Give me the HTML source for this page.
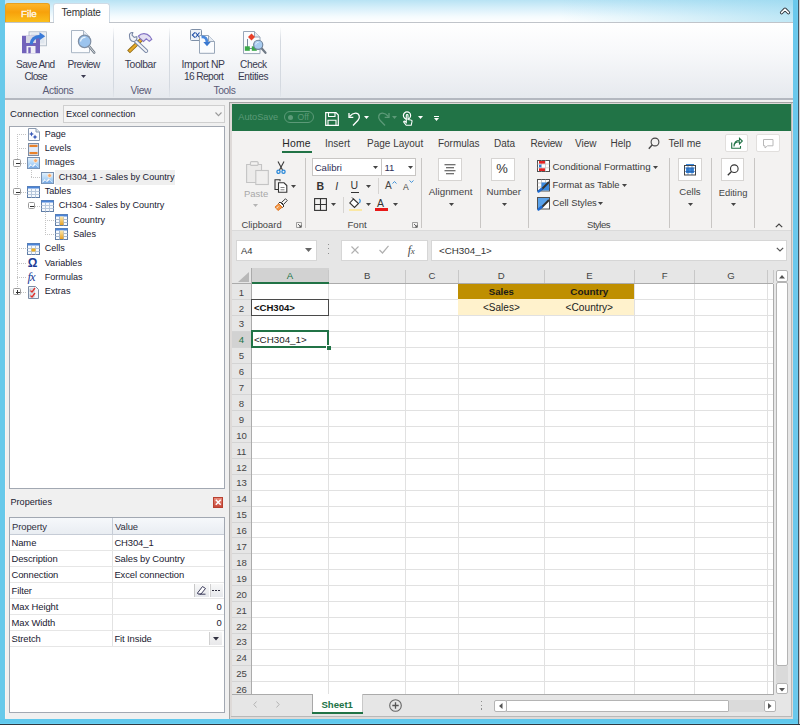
<!DOCTYPE html>
<html><head><meta charset="utf-8">
<style>
*{box-sizing:border-box;margin:0;padding:0}
html,body{width:800px;height:725px;overflow:hidden;background:#f0f0f0;font-family:"Liberation Sans",sans-serif;}
.a{position:absolute}
.t{position:absolute;white-space:nowrap;line-height:1;font-family:"Liberation Sans",sans-serif}
svg{position:absolute;overflow:visible}
</style></head><body>

<!-- top title/tab bar -->
<div class="a" style="left:0;top:0;width:800px;height:22px;background:linear-gradient(180deg,#b8e3f4 0%,#d6effa 35%,#f4fbfe 75%,#ffffff 100%)"></div>
<div class="a" style="left:560px;top:0;width:240px;height:22px;background:linear-gradient(90deg,rgba(140,212,238,0) 0%,rgba(140,212,238,.55) 100%)"></div>

<!-- File tab -->
<div class="a" style="left:5px;top:3px;width:45px;height:19px;border-radius:3px 3px 0 0;background:linear-gradient(180deg,#fdb52a 0%,#f7a10b 45%,#fbbf1b 100%);border:1px solid #e8a020;border-bottom:none"></div>
<div class="t" style="left:21px;top:8.6px;font-size:9.8px;color:#fff8ec;-webkit-text-stroke:0.35px #fff8ec">File</div>
<!-- Template tab -->
<div class="a" style="left:53px;top:3px;width:57px;height:20px;border-radius:3px 3px 0 0;background:#fff;border:1px solid #cfdbe6;border-bottom:none"></div>
<div class="t" style="left:61.4px;top:7.5px;font-size:10px;letter-spacing:-0.15px;color:#333">Template</div>

<!-- ribbon body -->
<div class="a" style="left:5px;top:21.5px;width:788px;height:77px;background:linear-gradient(180deg,#ffffff 0%,#f7f8fa 40%,#e6e9ee 100%);border-top:1px solid #c0c4ca"></div>
<div class="a" style="left:5px;top:97.5px;width:788px;height:2.5px;background:#b4b8c0"></div>

<!-- top ribbon contents -->
<svg style="left:779.5px;top:7px" width="10" height="7.5" viewBox="0 0 10 7.5"><path d="M1.6 5.6L5 2.2 8.4 5.6" fill="none" stroke="#2a3038" stroke-width="3.4" stroke-linecap="round" stroke-linejoin="round"/><path d="M1.6 5.6L5 2.2 8.4 5.6" fill="none" stroke="#fff" stroke-width="1.6" stroke-linecap="round" stroke-linejoin="round"/></svg>
<!-- separators -->
<div class="a" style="left:112.5px;top:27px;width:1px;height:70px;background:linear-gradient(180deg,rgba(210,216,224,0),#d4d9e0 20%,#d4d9e0 85%,rgba(210,216,224,.3))"></div>
<div class="a" style="left:169px;top:27px;width:1px;height:70px;background:linear-gradient(180deg,rgba(210,216,224,0),#d4d9e0 20%,#d4d9e0 85%,rgba(210,216,224,.3))"></div>
<div class="a" style="left:279.8px;top:27px;width:1px;height:70px;background:linear-gradient(180deg,rgba(210,216,224,0),#d4d9e0 20%,#d4d9e0 85%,rgba(210,216,224,.3))"></div>

<!-- Save and Close icon -->
<svg style="left:22px;top:31px" width="25" height="23" viewBox="0 0 25 23">
 <rect x="7" y="0.8" width="17.5" height="14" fill="#eef1f5" stroke="#a8b4c0" stroke-width="0.8"/>
 <rect x="9" y="2.5" width="13.5" height="10" fill="#dfe6ee"/>
 <path d="M0 4.7H16.5L18 6.2V22.2H0Z" fill="#7262ba"/>
 <rect x="4" y="4.7" width="10" height="7.3" fill="#d8d8e4"/>
 <rect x="4.5" y="15" width="9" height="7.2" fill="#f0eff6"/>
 <rect x="6.3" y="16.3" width="2.4" height="5.9" fill="#7262ba"/>
 <path d="M9 13.5C9.5 8.5 12.5 5.5 18.5 5.3" fill="none" stroke="#3a7ad8" stroke-width="3.2"/>
 <path d="M17.5 1.3L23.2 5.3 17.5 9.3z" fill="#3a7ad8"/>
</svg>
<!-- Preview icon -->
<svg style="left:71px;top:30px" width="25" height="25" viewBox="0 0 25 25">
 <path d="M0.5 0.5H12.5L18.5 6.5V22.7H0.5Z" fill="#fbfcfe" stroke="#a9b5c4"/>
 <path d="M12.5 0.5V6.5H18.5" fill="#e4eaf2" stroke="#a9b5c4"/>
 <path d="M17.5 15.5L23.2 22.5" stroke="#707a86" stroke-width="2.6" stroke-linecap="round"/>
 <path d="M17.5 15.5L23.2 22.5" stroke="#d8dde2" stroke-width="1" stroke-linecap="round"/>
 <circle cx="13.6" cy="11.4" r="6.2" fill="#9cc4ee" stroke="#7e8ea4" stroke-width="1.2"/>
 <path d="M9.5 11.5C9.8 8.7 11.6 7.2 14.5 7.3" fill="none" stroke="#eaf4fc" stroke-width="1.3"/>
</svg>
<!-- Toolbar icon -->
<svg style="left:124px;top:28px" width="32" height="28" viewBox="0 0 32 28">
 <path d="M6 22.5L18.5 10.5" stroke="#8a6410" stroke-width="4" stroke-linecap="square"/>
 <path d="M6 22.5L18.5 10.5" stroke="#e6aa28" stroke-width="2.4" stroke-linecap="square"/>
 <path d="M14.5 8C17.5 4.8 22.5 4.8 26 8.5L27.8 11.3 25.3 13.3 22.3 10.8 19.5 13.5 15.5 9.8Z" fill="#e4e0f2" stroke="#8474c4" stroke-width="1.1"/>
 <path d="M11.5 13L22.2 23" stroke="#7a88a6" stroke-width="4" stroke-linecap="round"/>
 <path d="M11.5 13L22.2 23" stroke="#f2f4f8" stroke-width="2" stroke-linecap="round"/>
 <path d="M5.5 8C5 5.8 6.5 4.3 8.8 4.6L8 7.2 10.2 9.3 12.8 8.6C13.5 11 11.8 13.8 9.2 13.5 6.8 13.3 5.6 10.5 5.5 8Z" fill="#f2f4f8" stroke="#7a88a6" stroke-width="1.1"/>
</svg>
<!-- Import NP icon -->
<svg style="left:190px;top:28.5px" width="26" height="25" viewBox="0 0 26 25">
 <rect x="0.5" y="0.5" width="11" height="11" rx="1" fill="#eef2f8" stroke="#7e90a8"/>
 <path d="M5 3.3L2.3 6 5 8.7" fill="none" stroke="#2050a8" stroke-width="1.1"/><path d="M5.5 3.5L9.5 8.5M9.5 3.5L5.5 8.5" stroke="#2050a8" stroke-width="1.1"/>
 <path d="M9.5 6.5H18.5L24.5 12.5V24.3H9.5Z" fill="#fbfcfe" stroke="#98a6b8"/>
 <path d="M18.5 6.5V12.5H24.5" fill="#e4eaf2" stroke="#98a6b8"/>
 <path d="M11.5 8C15 7.5 17 9.5 17 13.5" fill="none" stroke="#4a88dc" stroke-width="2.8"/>
 <path d="M13.3 13H20.7L17 17.3z" fill="#3a78d0"/>
</svg>
<!-- Check Entities icon -->
<svg style="left:242.5px;top:30.5px" width="24" height="24" viewBox="0 0 24 24">
 <path d="M0.5 0.5H11.5L17 6V22.6H0.5Z" fill="#fbfcfe" stroke="#98a6b8"/>
 <path d="M11.5 0.5V6H17" fill="#e4eaf2" stroke="#98a6b8"/>
 <path d="M4.5 8V17.5H9" fill="none" stroke="#6a7a90" stroke-width="0.9"/>
 <path d="M8.5 2.5L12 6 8.5 9.5 5 6z" fill="#e8402a"/>
 <rect x="1.8" y="15.3" width="5" height="4.5" fill="#3aa848"/>
 <rect x="8.8" y="15.3" width="5" height="4.5" fill="#3aa848"/>
 <path d="M17.5 16L22.5 21.8" stroke="#707a86" stroke-width="2.2" stroke-linecap="round"/>
 <circle cx="15.2" cy="13.8" r="4.6" fill="#a8ccf0" stroke="#6e8098" stroke-width="1.1"/>
 <path d="M12.8 13.5C13 12 14 11.3 15.5 11.3" fill="none" stroke="#f0f8ff" stroke-width="1"/>
</svg>

<!-- top ribbon labels -->
<div class="t" style="left:16px;top:59.93px;font-size:10.15px;letter-spacing:-0.59px;color:#3a3a50">Save And</div>
<div class="t" style="left:24.5px;top:71.93px;font-size:10.15px;letter-spacing:-0.69px;color:#3a3a50">Close</div>
<div class="t" style="left:67.5px;top:59.93px;font-size:10.15px;letter-spacing:-0.54px;color:#3a3a50">Preview</div>
<svg style="left:81.3px;top:74.5px" width="5" height="3" viewBox="0 0 5 3"><path d="M0 0H5L2.5 3z" fill="#3a3a50"/></svg>
<div class="t" style="left:42.5px;top:86.13px;font-size:10.26px;color:#5a5a76;letter-spacing:-0.40px">Actions</div>
<div class="t" style="left:124.8px;top:59.92px;font-size:10.37px;color:#3a3a50;letter-spacing:-0.40px">Toolbar</div>
<div class="t" style="left:130.5px;top:86.13px;font-size:10.26px;color:#5a5a76;letter-spacing:-0.40px">View</div>
<div class="t" style="left:181.6px;top:59.92px;font-size:10.37px;color:#3a3a50;letter-spacing:-0.40px">Import NP</div>
<div class="t" style="left:184px;top:71.7px;font-size:10.2px;color:#3a3a50;letter-spacing:-0.62px">16 Report</div>
<div class="t" style="left:240px;top:59.93px;font-size:10.15px;color:#3a3a50;letter-spacing:-0.39px">Check</div>
<div class="t" style="left:238px;top:71.93px;font-size:10.15px;color:#3a3a50;letter-spacing:-0.39px">Entities</div>
<div class="t" style="left:213.5px;top:86.13px;font-size:10.26px;color:#5a5a76;letter-spacing:-0.40px">Tools</div>
<div class="a" style="left:54px;top:20.5px;width:55px;height:2.5px;background:#fff"></div>
<!-- LEFT PANEL -->
<div class="a" style="left:5px;top:100px;width:1px;height:618px;background:#fbf3f0"></div>
<div class="t" style="left:10px;top:108.8px;font-size:9.6px;color:#202030">Connection</div>
<div class="a" style="left:63px;top:105px;width:161.5px;height:17.5px;border:1px solid #cfcfcf;background:#f5f5f5"></div>
<div class="t" style="left:66px;top:109.6px;font-size:9.2px;color:#202030">Excel connection</div>
<svg style="left:214.5px;top:112.3px" width="7" height="4.5" viewBox="0 0 7 4.5"><path d="M0.5 0.5L3.5 3.6L6.5 0.5" fill="none" stroke="#9a9a9a" stroke-width="1.1"/></svg>
<!-- tree box -->
<div class="a" style="left:8.5px;top:126px;width:216.5px;height:362.5px;border:1px solid #a2a8b2;background:#fff"></div>
<div class="a" style="left:17px;top:134px;width:1px;height:154px;background:repeating-linear-gradient(180deg,#c4c4c4 0 1px,transparent 1px 2px)"></div>
<div class="a" style="left:17px;top:134px;width:9px;height:1px;background:repeating-linear-gradient(90deg,#c4c4c4 0 1px,transparent 1px 2px)"></div>
<div class="a" style="left:17px;top:148px;width:9px;height:1px;background:repeating-linear-gradient(90deg,#c4c4c4 0 1px,transparent 1px 2px)"></div>
<div class="a" style="left:17px;top:163px;width:9px;height:1px;background:repeating-linear-gradient(90deg,#c4c4c4 0 1px,transparent 1px 2px)"></div>
<div class="a" style="left:31px;top:177px;width:9px;height:1px;background:repeating-linear-gradient(90deg,#c4c4c4 0 1px,transparent 1px 2px)"></div>
<div class="a" style="left:17px;top:192px;width:9px;height:1px;background:repeating-linear-gradient(90deg,#c4c4c4 0 1px,transparent 1px 2px)"></div>
<div class="a" style="left:31px;top:206px;width:9px;height:1px;background:repeating-linear-gradient(90deg,#c4c4c4 0 1px,transparent 1px 2px)"></div>
<div class="a" style="left:45px;top:220px;width:9px;height:1px;background:repeating-linear-gradient(90deg,#c4c4c4 0 1px,transparent 1px 2px)"></div>
<div class="a" style="left:45px;top:234px;width:9px;height:1px;background:repeating-linear-gradient(90deg,#c4c4c4 0 1px,transparent 1px 2px)"></div>
<div class="a" style="left:17px;top:248px;width:9px;height:1px;background:repeating-linear-gradient(90deg,#c4c4c4 0 1px,transparent 1px 2px)"></div>
<div class="a" style="left:17px;top:263px;width:9px;height:1px;background:repeating-linear-gradient(90deg,#c4c4c4 0 1px,transparent 1px 2px)"></div>
<div class="a" style="left:17px;top:277px;width:9px;height:1px;background:repeating-linear-gradient(90deg,#c4c4c4 0 1px,transparent 1px 2px)"></div>
<div class="a" style="left:17px;top:292px;width:9px;height:1px;background:repeating-linear-gradient(90deg,#c4c4c4 0 1px,transparent 1px 2px)"></div>
<div class="a" style="left:31px;top:170px;width:1px;height:8px;background:repeating-linear-gradient(180deg,#c4c4c4 0 1px,transparent 1px 2px)"></div>
<div class="a" style="left:45px;top:212px;width:1px;height:22px;background:repeating-linear-gradient(180deg,#c4c4c4 0 1px,transparent 1px 2px)"></div>
<svg style="left:28px;top:128.2px" width="12" height="13" viewBox="0 0 12 13"><path d="M0.5 0.5H8L11.5 4V12.5H0.5Z" fill="#fdfdff" stroke="#8a9ab0"/><path d="M8 0.5V4H11.5" fill="#dfe6f0" stroke="#8a9ab0"/><path d="M3.5 3.5l.8 1.7 1.7.8-1.7.8-.8 1.7-.8-1.7-1.7-.8 1.7-.8z" fill="#3a5ab8"/><path d="M7 6.5l.8 1.7 1.7.8-1.7.8L7 11.5l-.8-1.7-1.7-.8 1.7-.8z" fill="#3a5ab8"/></svg>
<div class="t" style="left:44.7px;top:129.5px;font-size:9.1px;color:#202030">Page</div>
<svg style="left:28px;top:142.5px" width="11" height="13" viewBox="0 0 11 13"><rect x="0.5" y="0.5" width="10" height="12" fill="#dce6f4" stroke="#7c8ca4"/><rect x="1.5" y="1.8" width="8" height="2.2" fill="#e8822a"/><rect x="1.5" y="9" width="8" height="2.2" fill="#e8822a"/><rect x="1.5" y="4.8" width="8" height="3.4" fill="#e4ecf8"/></svg>
<div class="t" style="left:44.7px;top:143.8px;font-size:9.1px;color:#202030">Levels</div>
<svg style="left:27px;top:157.3px" width="13" height="12" viewBox="0 0 13 12"><defs><linearGradient id="sky" x1="0" y1="0" x2="0" y2="1"><stop offset="0" stop-color="#e4f2fd"/><stop offset="1" stop-color="#88bdf0"/></linearGradient></defs><rect x="0.5" y="0.5" width="12" height="11" fill="url(#sky)" stroke="#7890b0"/><circle cx="8.6" cy="3.6" r="1.9" fill="#f8a868" stroke="#fff0e0" stroke-width=".7"/><path d="M1 10.5L3.5 7l2 2 2-2.5 4.5 4z" fill="#f4f8fc"/><path d="M1 11.2L4 8.5 6 10l2.5-2 3.5 3.2z" fill="#7eaee6"/></svg>
<div class="t" style="left:44.7px;top:158.3px;font-size:9.1px;color:#202030">Images</div>
<div class="a" style="left:13.3px;top:159.4px;width:7.5px;height:7.5px;border:1px solid #9a9a9a;border-radius:1.5px;background:#fff"><div class="a" style="left:1.5px;top:3px;width:4px;height:1px;background:#333"></div></div>
<div class="a" style="left:55px;top:170px;width:120px;height:14.5px;background:#efefef"></div>
<svg style="left:41px;top:171.60000000000002px" width="13" height="12" viewBox="0 0 13 12"><defs><linearGradient id="sky" x1="0" y1="0" x2="0" y2="1"><stop offset="0" stop-color="#e4f2fd"/><stop offset="1" stop-color="#88bdf0"/></linearGradient></defs><rect x="0.5" y="0.5" width="12" height="11" fill="url(#sky)" stroke="#7890b0"/><circle cx="8.6" cy="3.6" r="1.9" fill="#f8a868" stroke="#fff0e0" stroke-width=".7"/><path d="M1 10.5L3.5 7l2 2 2-2.5 4.5 4z" fill="#f4f8fc"/><path d="M1 11.2L4 8.5 6 10l2.5-2 3.5 3.2z" fill="#7eaee6"/></svg>
<div class="t" style="left:58.7px;top:172.6px;font-size:9.1px;color:#202030">CH304_1 - Sales by Country</div>
<svg style="left:27px;top:185.5px" width="13" height="12" viewBox="0 0 13 12"><rect x="0.5" y="0.5" width="12" height="11" fill="#f6f9fd" stroke="#5f7da6"/><rect x="0.5" y="0.5" width="12" height="2" fill="#4a84d8"/><path d="M0.5 5.5H12.5M0.5 8.5H12.5M4.5 3V11.5M8.5 3V11.5" stroke="#b8c8dc" stroke-width="1"/></svg>
<div class="t" style="left:44.7px;top:187.4px;font-size:9.1px;color:#202030">Tables</div>
<div class="a" style="left:13.3px;top:187.9px;width:7.5px;height:7.5px;border:1px solid #9a9a9a;border-radius:1.5px;background:#fff"><div class="a" style="left:1.5px;top:3px;width:4px;height:1px;background:#333"></div></div>
<svg style="left:41px;top:199.5px" width="13" height="12" viewBox="0 0 13 12"><rect x="0.5" y="0.5" width="12" height="11" fill="#f6f9fd" stroke="#5f7da6"/><rect x="0.5" y="0.5" width="12" height="2" fill="#4a84d8"/><path d="M0.5 5.5H12.5M0.5 8.5H12.5M4.5 3V11.5M8.5 3V11.5" stroke="#b8c8dc" stroke-width="1"/></svg>
<div class="t" style="left:58.7px;top:201.4px;font-size:9.1px;color:#202030">CH304 - Sales by Country</div>
<div class="a" style="left:27.9px;top:201.9px;width:7.5px;height:7.5px;border:1px solid #9a9a9a;border-radius:1.5px;background:#fff"><div class="a" style="left:1.5px;top:3px;width:4px;height:1px;background:#333"></div></div>
<svg style="left:55px;top:214.0px" width="13" height="12" viewBox="0 0 13 12"><defs><linearGradient id="colg" x1="0" y1="0" x2="0" y2="1"><stop offset="0" stop-color="#fbe8b0"/><stop offset="1" stop-color="#e8a020"/></linearGradient></defs><rect x="0.5" y="0.5" width="12" height="11" fill="#f6f9fd" stroke="#5f7da6"/><rect x="0.5" y="0.5" width="12" height="2" fill="#4a84d8"/><path d="M0.5 5.5H12.5M0.5 8.5H12.5M4.5 3V11.5M8.5 3V11.5" stroke="#a8b8cc" stroke-width="1"/><rect x="5" y="2.5" width="3.5" height="8.5" fill="url(#colg)"/></svg>
<div class="t" style="left:73.2px;top:215.9px;font-size:9.1px;color:#202030">Country</div>
<svg style="left:55px;top:228.0px" width="13" height="12" viewBox="0 0 13 12"><defs><linearGradient id="colg" x1="0" y1="0" x2="0" y2="1"><stop offset="0" stop-color="#fbe8b0"/><stop offset="1" stop-color="#e8a020"/></linearGradient></defs><rect x="0.5" y="0.5" width="12" height="11" fill="#f6f9fd" stroke="#5f7da6"/><rect x="0.5" y="0.5" width="12" height="2" fill="#4a84d8"/><path d="M0.5 5.5H12.5M0.5 8.5H12.5M4.5 3V11.5M8.5 3V11.5" stroke="#a8b8cc" stroke-width="1"/><rect x="5" y="2.5" width="3.5" height="8.5" fill="url(#colg)"/></svg>
<div class="t" style="left:73.2px;top:229.9px;font-size:9.1px;color:#202030">Sales</div>
<svg style="left:27px;top:242.5px" width="13" height="12" viewBox="0 0 13 12"><rect x="0.5" y="0.5" width="12" height="11" fill="#f6f9fd" stroke="#5f7da6"/><rect x="0.5" y="0.5" width="12" height="2" fill="#4a84d8"/><path d="M0.5 5.5H12.5M0.5 8.5H12.5M4.5 3V11.5M8.5 3V11.5" stroke="#b8c8dc" stroke-width="1"/><rect x="4.5" y="5.5" width="4" height="3" fill="#f0b020"/></svg>
<div class="t" style="left:44.7px;top:244.4px;font-size:9.1px;color:#202030">Cells</div>
<div class="t" style="left:27.8px;top:257.0px;font-size:12px;font-weight:bold;-webkit-text-stroke:0;color:#1c3c96">&#937;</div>
<div class="t" style="left:44.7px;top:258.7px;font-size:9.1px;color:#202030">Variables</div>
<div class="t" style="left:27.5px;top:271.2px;font-family:'Liberation Serif',serif;font-style:italic;font-size:12.5px;color:#1c3c96;letter-spacing:-1px">fx</div>
<div class="t" style="left:44.7px;top:272.9px;font-size:9.1px;color:#202030">Formulas</div>
<svg style="left:28px;top:285.5px" width="11" height="13" viewBox="0 0 11 13"><path d="M0.5 0.5H7.5L10.5 3.5V12.5H0.5Z" fill="#f4f6fa" stroke="#7c8ca4"/><rect x="2" y="3" width="4" height="3" fill="#fff" stroke="#8898b0" stroke-width=".6"/><rect x="2" y="8" width="4" height="3" fill="#fff" stroke="#8898b0" stroke-width=".6"/><path d="M2.5 4.5l1.5 1.5 3-4M2.5 9.5l1.5 1.5 3-4" stroke="#e0302a" stroke-width="1.3" fill="none"/></svg>
<div class="t" style="left:44.7px;top:287.4px;font-size:9.1px;color:#202030">Extras</div>
<div class="a" style="left:13.3px;top:287.9px;width:7.5px;height:7.5px;border:1px solid #9a9a9a;border-radius:1.5px;background:#fff"><div class="a" style="left:1.5px;top:3px;width:4px;height:1px;background:#333"></div><div class="a" style="left:3px;top:1.5px;width:1px;height:4px;background:#333"></div></div>
<!-- properties -->
<div class="t" style="left:10.5px;top:497.8px;font-size:9.1px;color:#202030">Properties</div>
<div class="a" style="left:212.5px;top:497px;width:10.5px;height:10.5px;background:linear-gradient(180deg,#e88a7a,#c8483a);border:1px solid #b84030"></div>
<svg style="left:214.5px;top:499px" width="6.5" height="6.5" viewBox="0 0 6.5 6.5"><path d="M0.8 0.8L5.7 5.7M5.7 0.8L0.8 5.7" stroke="#fff" stroke-width="1.5"/></svg>
<div class="a" style="left:8.5px;top:517.2px;width:216px;height:196.3px;border:1px solid #a2a8b2;background:#fff"></div>
<div class="a" style="left:9.5px;top:518.2px;width:214px;height:16.9px;background:linear-gradient(180deg,#f6f8fb,#e9edf2);border-bottom:1px solid #c6ccd6"></div>
<div class="a" style="left:112px;top:518.2px;width:1px;height:16.9px;background:#c6ccd6"></div>
<div class="a" style="left:112px;top:534.5px;width:1px;height:111px;background:#e2e2e2"></div>
<div class="t" style="left:12px;top:521.80px;font-size:9.45px;letter-spacing:-0.1px;color:#303040">Property</div>
<div class="t" style="left:115px;top:521.80px;font-size:9.45px;letter-spacing:-0.1px;color:#303040">Value</div>
<div class="a" style="left:9.5px;top:550.07px;width:214px;height:1px;background:#e6e6e6"></div>
<div class="t" style="left:11.5px;top:538.00px;font-size:9.45px;letter-spacing:-0.1px;color:#202030">Name</div>
<div class="t" style="left:114.4px;top:538.00px;font-size:9.45px;letter-spacing:-0.1px;color:#202030">CH304_1</div>
<div class="a" style="left:9.5px;top:566.04px;width:214px;height:1px;background:#e6e6e6"></div>
<div class="t" style="left:11.5px;top:553.97px;font-size:9.45px;letter-spacing:-0.1px;color:#202030">Description</div>
<div class="t" style="left:114.4px;top:553.97px;font-size:9.45px;letter-spacing:-0.1px;color:#202030">Sales by Country</div>
<div class="a" style="left:9.5px;top:582.01px;width:214px;height:1px;background:#e6e6e6"></div>
<div class="t" style="left:11.5px;top:569.94px;font-size:9.45px;letter-spacing:-0.1px;color:#202030">Connection</div>
<div class="t" style="left:114.4px;top:569.94px;font-size:9.45px;letter-spacing:-0.1px;color:#202030">Excel connection</div>
<div class="a" style="left:9.5px;top:597.98px;width:214px;height:1px;background:#e6e6e6"></div>
<div class="t" style="left:11.5px;top:585.91px;font-size:9.45px;letter-spacing:-0.1px;color:#202030">Filter</div>
<div class="a" style="left:9.5px;top:613.95px;width:214px;height:1px;background:#e6e6e6"></div>
<div class="t" style="left:11.5px;top:601.88px;font-size:9.45px;letter-spacing:-0.1px;color:#202030">Max Height</div>
<div class="t" style="right:578.2px;top:601.88px;font-size:9.45px;color:#202030">0</div>
<div class="a" style="left:9.5px;top:629.92px;width:214px;height:1px;background:#e6e6e6"></div>
<div class="t" style="left:11.5px;top:617.85px;font-size:9.45px;letter-spacing:-0.1px;color:#202030">Max Width</div>
<div class="t" style="right:578.2px;top:617.85px;font-size:9.45px;color:#202030">0</div>
<div class="a" style="left:9.5px;top:645.89px;width:214px;height:1px;background:#e6e6e6"></div>
<div class="t" style="left:11.5px;top:633.82px;font-size:9.45px;letter-spacing:-0.1px;color:#202030">Stretch</div>
<div class="t" style="left:114.4px;top:633.82px;font-size:9.45px;letter-spacing:-0.1px;color:#202030">Fit Inside</div>
<div class="a" style="left:193.6px;top:583.8px;width:15px;height:13px;background:linear-gradient(180deg,#f8f8f8,#e6e8ec);border-left:1px solid #c8c8c8"></div>
<svg style="left:195.5px;top:585px" width="11" height="10" viewBox="0 0 11 10"><path d="M1.5 8L6.5 1.5 9.5 3.5 5 9H2z" fill="#fff" stroke="#3a3a5a" stroke-width="1"/><path d="M3.5 9.2H9.5" stroke="#3a3a5a" stroke-width="1"/></svg>
<div class="a" style="left:209.6px;top:583.8px;width:13px;height:13px;background:linear-gradient(180deg,#f8f8f8,#e6e8ec);border-left:1px solid #d0d0d0"></div>
<div class="a" style="left:212.3px;top:589.5px;width:1.5px;height:1.5px;background:#303040"></div>
<div class="a" style="left:215.3px;top:589.5px;width:1.5px;height:1.5px;background:#303040"></div>
<div class="a" style="left:218.3px;top:589.5px;width:1.5px;height:1.5px;background:#303040"></div>
<div class="a" style="left:209.1px;top:631.5px;width:13px;height:13.8px;background:linear-gradient(180deg,#f6f6f6,#e8e8ea);border-left:1px solid #d0d0d0"></div>
<svg style="left:213px;top:636.5px" width="6" height="4" viewBox="0 0 6 4"><path d="M0 0H6L3 3.5z" fill="#303040"/></svg>
<!-- EXCEL WINDOW -->
<div class="a" style="left:229px;top:101.5px;width:564px;height:617px;background:#dedad8;border-left:1px solid #a4a4a4;border-top:1px solid #a4a4a4"></div>
<div class="a" style="left:231.7px;top:104px;width:559.5px;height:612px;background:#e6e6e6"></div>
<div class="a" style="left:791px;top:103px;width:1px;height:614px;background:#b8b8b8"></div>
<div class="a" style="left:231px;top:716px;width:561px;height:1px;background:#b8b8b8"></div>
<div class="a" style="left:231.7px;top:104px;width:559px;height:26.5px;background:#217346"></div>
<div class="a" style="left:231.7px;top:130.5px;width:559px;height:100.5px;background:#f3f2f1;border-bottom:1px solid #dadada"></div>
<div class="a" style="left:231.7px;top:268.3px;width:541.8px;height:15.199999999999989px;background:#e6e6e6"></div>
<div class="a" style="left:251.3px;top:283.5px;width:522.2px;height:411.0px;background:#fff"></div>
<div class="a" style="left:231.7px;top:283.5px;width:19.6px;height:411.0px;background:#e6e6e6"></div>
<svg style="left:238px;top:271.5px" width="11" height="10" viewBox="0 0 11 10"><path d="M11 0V10H0z" fill="#b8b8b8"/></svg>
<div class="a" style="left:251.3px;top:268.3px;width:77.3px;height:15.199999999999989px;background:#d2d2d2"></div>
<div class="a" style="left:251.3px;top:281.9px;width:77.3px;height:2px;background:#217346"></div>
<div class="a" style="left:231.7px;top:331.20px;width:19.6px;height:15.90px;background:#d2d2d2"></div>
<div class="a" style="left:458.4px;top:283.5px;width:176.0px;height:15.90px;background:#bf8f00"></div>
<div class="a" style="left:458.4px;top:299.40px;width:176.0px;height:15.90px;background:#fff2cc"></div>
<div class="a" style="left:251.3px;top:298.90px;width:522.2px;height:1px;background:#e1e1e1"></div>
<div class="a" style="left:231.7px;top:298.90px;width:19.6px;height:1px;background:#d4d4d4"></div>
<div class="a" style="left:251.3px;top:314.80px;width:522.2px;height:1px;background:#e1e1e1"></div>
<div class="a" style="left:231.7px;top:314.80px;width:19.6px;height:1px;background:#d4d4d4"></div>
<div class="a" style="left:251.3px;top:330.70px;width:522.2px;height:1px;background:#e1e1e1"></div>
<div class="a" style="left:231.7px;top:330.70px;width:19.6px;height:1px;background:#d4d4d4"></div>
<div class="a" style="left:251.3px;top:346.60px;width:522.2px;height:1px;background:#e1e1e1"></div>
<div class="a" style="left:231.7px;top:346.60px;width:19.6px;height:1px;background:#d4d4d4"></div>
<div class="a" style="left:251.3px;top:362.50px;width:522.2px;height:1px;background:#e1e1e1"></div>
<div class="a" style="left:231.7px;top:362.50px;width:19.6px;height:1px;background:#d4d4d4"></div>
<div class="a" style="left:251.3px;top:378.40px;width:522.2px;height:1px;background:#e1e1e1"></div>
<div class="a" style="left:231.7px;top:378.40px;width:19.6px;height:1px;background:#d4d4d4"></div>
<div class="a" style="left:251.3px;top:394.30px;width:522.2px;height:1px;background:#e1e1e1"></div>
<div class="a" style="left:231.7px;top:394.30px;width:19.6px;height:1px;background:#d4d4d4"></div>
<div class="a" style="left:251.3px;top:410.20px;width:522.2px;height:1px;background:#e1e1e1"></div>
<div class="a" style="left:231.7px;top:410.20px;width:19.6px;height:1px;background:#d4d4d4"></div>
<div class="a" style="left:251.3px;top:426.10px;width:522.2px;height:1px;background:#e1e1e1"></div>
<div class="a" style="left:231.7px;top:426.10px;width:19.6px;height:1px;background:#d4d4d4"></div>
<div class="a" style="left:251.3px;top:442.00px;width:522.2px;height:1px;background:#e1e1e1"></div>
<div class="a" style="left:231.7px;top:442.00px;width:19.6px;height:1px;background:#d4d4d4"></div>
<div class="a" style="left:251.3px;top:457.90px;width:522.2px;height:1px;background:#e1e1e1"></div>
<div class="a" style="left:231.7px;top:457.90px;width:19.6px;height:1px;background:#d4d4d4"></div>
<div class="a" style="left:251.3px;top:473.80px;width:522.2px;height:1px;background:#e1e1e1"></div>
<div class="a" style="left:231.7px;top:473.80px;width:19.6px;height:1px;background:#d4d4d4"></div>
<div class="a" style="left:251.3px;top:489.70px;width:522.2px;height:1px;background:#e1e1e1"></div>
<div class="a" style="left:231.7px;top:489.70px;width:19.6px;height:1px;background:#d4d4d4"></div>
<div class="a" style="left:251.3px;top:505.60px;width:522.2px;height:1px;background:#e1e1e1"></div>
<div class="a" style="left:231.7px;top:505.60px;width:19.6px;height:1px;background:#d4d4d4"></div>
<div class="a" style="left:251.3px;top:521.50px;width:522.2px;height:1px;background:#e1e1e1"></div>
<div class="a" style="left:231.7px;top:521.50px;width:19.6px;height:1px;background:#d4d4d4"></div>
<div class="a" style="left:251.3px;top:537.40px;width:522.2px;height:1px;background:#e1e1e1"></div>
<div class="a" style="left:231.7px;top:537.40px;width:19.6px;height:1px;background:#d4d4d4"></div>
<div class="a" style="left:251.3px;top:553.30px;width:522.2px;height:1px;background:#e1e1e1"></div>
<div class="a" style="left:231.7px;top:553.30px;width:19.6px;height:1px;background:#d4d4d4"></div>
<div class="a" style="left:251.3px;top:569.20px;width:522.2px;height:1px;background:#e1e1e1"></div>
<div class="a" style="left:231.7px;top:569.20px;width:19.6px;height:1px;background:#d4d4d4"></div>
<div class="a" style="left:251.3px;top:585.10px;width:522.2px;height:1px;background:#e1e1e1"></div>
<div class="a" style="left:231.7px;top:585.10px;width:19.6px;height:1px;background:#d4d4d4"></div>
<div class="a" style="left:251.3px;top:601.00px;width:522.2px;height:1px;background:#e1e1e1"></div>
<div class="a" style="left:231.7px;top:601.00px;width:19.6px;height:1px;background:#d4d4d4"></div>
<div class="a" style="left:251.3px;top:616.90px;width:522.2px;height:1px;background:#e1e1e1"></div>
<div class="a" style="left:231.7px;top:616.90px;width:19.6px;height:1px;background:#d4d4d4"></div>
<div class="a" style="left:251.3px;top:632.80px;width:522.2px;height:1px;background:#e1e1e1"></div>
<div class="a" style="left:231.7px;top:632.80px;width:19.6px;height:1px;background:#d4d4d4"></div>
<div class="a" style="left:251.3px;top:648.70px;width:522.2px;height:1px;background:#e1e1e1"></div>
<div class="a" style="left:231.7px;top:648.70px;width:19.6px;height:1px;background:#d4d4d4"></div>
<div class="a" style="left:251.3px;top:664.60px;width:522.2px;height:1px;background:#e1e1e1"></div>
<div class="a" style="left:231.7px;top:664.60px;width:19.6px;height:1px;background:#d4d4d4"></div>
<div class="a" style="left:251.3px;top:680.50px;width:522.2px;height:1px;background:#e1e1e1"></div>
<div class="a" style="left:231.7px;top:680.50px;width:19.6px;height:1px;background:#d4d4d4"></div>
<div class="a" style="left:328.1px;top:283.5px;width:1px;height:411.0px;background:#e1e1e1"></div>
<div class="a" style="left:328.1px;top:270.3px;width:1px;height:13.199999999999989px;background:#c8c8c8"></div>
<div class="a" style="left:405.1px;top:283.5px;width:1px;height:411.0px;background:#e1e1e1"></div>
<div class="a" style="left:405.1px;top:270.3px;width:1px;height:13.199999999999989px;background:#c8c8c8"></div>
<div class="a" style="left:457.9px;top:283.5px;width:1px;height:411.0px;background:#e1e1e1"></div>
<div class="a" style="left:457.9px;top:270.3px;width:1px;height:13.199999999999989px;background:#c8c8c8"></div>
<div class="a" style="left:543.8px;top:283.5px;width:1px;height:411.0px;background:#e1e1e1"></div>
<div class="a" style="left:543.8px;top:270.3px;width:1px;height:13.199999999999989px;background:#c8c8c8"></div>
<div class="a" style="left:633.9px;top:283.5px;width:1px;height:411.0px;background:#e1e1e1"></div>
<div class="a" style="left:633.9px;top:270.3px;width:1px;height:13.199999999999989px;background:#c8c8c8"></div>
<div class="a" style="left:694.4px;top:283.5px;width:1px;height:411.0px;background:#e1e1e1"></div>
<div class="a" style="left:694.4px;top:270.3px;width:1px;height:13.199999999999989px;background:#c8c8c8"></div>
<div class="a" style="left:766.6px;top:283.5px;width:1px;height:411.0px;background:#e1e1e1"></div>
<div class="a" style="left:766.6px;top:270.3px;width:1px;height:13.199999999999989px;background:#c8c8c8"></div>
<div class="a" style="left:773.0px;top:283.5px;width:1px;height:411.0px;background:#e1e1e1"></div>
<div class="a" style="left:773.0px;top:270.3px;width:1px;height:13.199999999999989px;background:#c8c8c8"></div>
<div class="a" style="left:458.4px;top:283.5px;width:176.0px;height:15.50px;background:#bf8f00"></div>
<div class="a" style="left:458.4px;top:299.00px;width:176.0px;height:15.90px;background:#fff2cc"></div>
<div class="a" style="left:231.7px;top:283.0px;width:541.8px;height:1px;background:#ababab"></div>
<div class="a" style="left:251.3px;top:281.9px;width:77.3px;height:2px;background:#217346"></div>
<div class="a" style="left:250.8px;top:268.3px;width:1px;height:426.2px;background:#ababab"></div>
<div class="a" style="left:773px;top:283.5px;width:1px;height:411.0px;background:#ababab"></div>
<div class="a" style="left:231.7px;top:694.0px;width:542px;height:1px;background:#ababab"></div>
<div class="t" style="left:251.3px;width:77.30000000000001px;text-align:center;top:271.1px;font-size:9.6px;color:#217346">A</div>
<div class="t" style="left:328.6px;width:77.0px;text-align:center;top:271.1px;font-size:9.6px;color:#444">B</div>
<div class="t" style="left:405.6px;width:52.799999999999955px;text-align:center;top:271.1px;font-size:9.6px;color:#444">C</div>
<div class="t" style="left:458.4px;width:85.89999999999998px;text-align:center;top:271.1px;font-size:9.6px;color:#444">D</div>
<div class="t" style="left:544.3px;width:90.10000000000002px;text-align:center;top:271.1px;font-size:9.6px;color:#444">E</div>
<div class="t" style="left:634.4px;width:60.5px;text-align:center;top:271.1px;font-size:9.6px;color:#444">F</div>
<div class="t" style="left:694.9px;width:72.20000000000005px;text-align:center;top:271.1px;font-size:9.6px;color:#444">G</div>
<div class="t" style="left:231.7px;width:19.6px;text-align:center;top:287.65px;font-size:9.6px;color:#444">1</div>
<div class="t" style="left:231.7px;width:19.6px;text-align:center;top:303.55px;font-size:9.6px;color:#444">2</div>
<div class="t" style="left:231.7px;width:19.6px;text-align:center;top:319.45px;font-size:9.6px;color:#444">3</div>
<div class="t" style="left:231.7px;width:19.6px;text-align:center;top:335.35px;font-size:9.6px;color:#217346">4</div>
<div class="t" style="left:231.7px;width:19.6px;text-align:center;top:351.25px;font-size:9.6px;color:#444">5</div>
<div class="t" style="left:231.7px;width:19.6px;text-align:center;top:367.15px;font-size:9.6px;color:#444">6</div>
<div class="t" style="left:231.7px;width:19.6px;text-align:center;top:383.05px;font-size:9.6px;color:#444">7</div>
<div class="t" style="left:231.7px;width:19.6px;text-align:center;top:398.95px;font-size:9.6px;color:#444">8</div>
<div class="t" style="left:231.7px;width:19.6px;text-align:center;top:414.85px;font-size:9.6px;color:#444">9</div>
<div class="t" style="left:231.7px;width:19.6px;text-align:center;top:430.75px;font-size:9.6px;color:#444">10</div>
<div class="t" style="left:231.7px;width:19.6px;text-align:center;top:446.65px;font-size:9.6px;color:#444">11</div>
<div class="t" style="left:231.7px;width:19.6px;text-align:center;top:462.55px;font-size:9.6px;color:#444">12</div>
<div class="t" style="left:231.7px;width:19.6px;text-align:center;top:478.45px;font-size:9.6px;color:#444">13</div>
<div class="t" style="left:231.7px;width:19.6px;text-align:center;top:494.35px;font-size:9.6px;color:#444">14</div>
<div class="t" style="left:231.7px;width:19.6px;text-align:center;top:510.25px;font-size:9.6px;color:#444">15</div>
<div class="t" style="left:231.7px;width:19.6px;text-align:center;top:526.15px;font-size:9.6px;color:#444">16</div>
<div class="t" style="left:231.7px;width:19.6px;text-align:center;top:542.05px;font-size:9.6px;color:#444">17</div>
<div class="t" style="left:231.7px;width:19.6px;text-align:center;top:557.95px;font-size:9.6px;color:#444">18</div>
<div class="t" style="left:231.7px;width:19.6px;text-align:center;top:573.85px;font-size:9.6px;color:#444">19</div>
<div class="t" style="left:231.7px;width:19.6px;text-align:center;top:589.75px;font-size:9.6px;color:#444">20</div>
<div class="t" style="left:231.7px;width:19.6px;text-align:center;top:605.65px;font-size:9.6px;color:#444">21</div>
<div class="t" style="left:231.7px;width:19.6px;text-align:center;top:621.55px;font-size:9.6px;color:#444">22</div>
<div class="t" style="left:231.7px;width:19.6px;text-align:center;top:637.45px;font-size:9.6px;color:#444">23</div>
<div class="t" style="left:231.7px;width:19.6px;text-align:center;top:653.35px;font-size:9.6px;color:#444">24</div>
<div class="t" style="left:231.7px;width:19.6px;text-align:center;top:669.25px;font-size:9.6px;color:#444">25</div>
<div class="t" style="left:231.7px;width:19.6px;text-align:center;top:685.15px;font-size:9.6px;color:#444">26</div>
<div class="a" style="left:251px;top:298.70px;width:78px;height:17.10px;border:1px solid #4a4a4a"></div>
<div class="a" style="left:251px;top:330.00px;width:78.3px;height:17.50px;border:2px solid #217346"></div>
<div class="a" style="left:326.3px;top:344.80px;width:5px;height:5px;background:#fff"></div>
<div class="a" style="left:327px;top:345.50px;width:4px;height:4px;background:#217346"></div>
<div class="t" style="left:253.9px;top:303.20px;font-size:9.6px;font-weight:bold;-webkit-text-stroke:0;color:#111">&lt;CH304&gt;</div>
<div class="t" style="left:253.9px;top:335.00px;font-size:9.8px;color:#222">&lt;CH304_1&gt;</div>
<div class="t" style="left:458.4px;width:86px;text-align:center;top:287.30px;font-size:9.6px;font-weight:bold;-webkit-text-stroke:0;color:#1a1a1a">Sales</div>
<div class="t" style="left:544.3px;width:90px;text-align:center;top:287.30px;font-size:9.9px;font-weight:bold;-webkit-text-stroke:0;color:#1a1a1a">Country</div>
<div class="t" style="left:458.4px;width:86px;text-align:center;top:303.20px;font-size:10px;color:#222">&lt;Sales&gt;</div>
<div class="t" style="left:544.3px;width:90px;text-align:center;top:303.20px;font-size:10.2px;color:#222">&lt;Country&gt;</div>
<div class="a" style="left:235.7px;top:240px;width:81px;height:21px;background:#fff;border:1px solid #d6d6d6"></div>
<div class="t" style="left:241px;top:245.8px;font-size:9.4px;color:#333">A4</div>
<svg style="left:305px;top:247.5px" width="7" height="4" viewBox="0 0 7 4"><path d="M0 0H7L3.5 4z" fill="#666"/></svg>
<div class="a" style="left:327.8px;top:243.5px;width:1.3px;height:1.3px;background:#909090"></div>
<div class="a" style="left:327.8px;top:248px;width:1.3px;height:1.3px;background:#909090"></div>
<div class="a" style="left:327.8px;top:252.5px;width:1.3px;height:1.3px;background:#909090"></div>
<div class="a" style="left:340.6px;top:240px;width:87.2px;height:21px;background:#fff;border:1px solid #d6d6d6"></div>
<svg style="left:351px;top:245.5px" width="8" height="8" viewBox="0 0 8 8"><path d="M0.5 0.5L7.5 7.5M7.5 0.5L0.5 7.5" stroke="#b0b0b0" stroke-width="1.1"/></svg>
<svg style="left:379px;top:245px" width="10" height="9" viewBox="0 0 10 9"><path d="M0.5 5L3.5 8 9.5 0.8" fill="none" stroke="#b0b0b0" stroke-width="1.2"/></svg>
<div class="t" style="left:407.8px;top:244px;font-family:'Liberation Serif',serif;font-style:italic;font-size:12px;color:#4a4a4a;letter-spacing:-0.5px">f<span style="font-size:9px">x</span></div>
<div class="a" style="left:430.5px;top:240px;width:356px;height:21px;background:#fff;border:1px solid #d6d6d6"></div>
<div class="t" style="left:439px;top:245.6px;font-size:9.8px;color:#333">&lt;CH304_1&gt;</div>
<svg style="left:775.5px;top:247px" width="8" height="5" viewBox="0 0 8 5"><path d="M0.8 0.8L4 4 7.2 0.8" fill="none" stroke="#555" stroke-width="1.2"/></svg>
<div class="a" style="left:776.3px;top:270.2px;width:11.6px;height:11.6px;background:#fff;border:1px solid #b4b4b4;border-radius:2px"></div>
<svg style="left:779.3px;top:274.5px" width="6" height="3.5" viewBox="0 0 6 3.5"><path d="M0 3.5H6L3 0z" fill="#555"/></svg>
<div class="a" style="left:776.3px;top:282px;width:11.6px;height:384px;background:#fff;border:1px solid #b4b4b4;border-radius:2px"></div>
<div class="a" style="left:776.3px;top:666px;width:11.6px;height:17.4px;background:#dadada"></div>
<div class="a" style="left:776.3px;top:683.4px;width:11.6px;height:11px;background:#fff;border:1px solid #b4b4b4;border-radius:2px"></div>
<svg style="left:779.3px;top:687.5px" width="6" height="3.5" viewBox="0 0 6 3.5"><path d="M0 0H6L3 3.5z" fill="#555"/></svg>
<div class="a" style="left:231.7px;top:694.7px;width:559px;height:21.5px;background:#e6e6e6"></div>
<svg style="left:253px;top:701px" width="4" height="7" viewBox="0 0 4 7"><path d="M3.5 0.5L0.8 3.5 3.5 6.5" fill="none" stroke="#b4b4b4" stroke-width="1"/></svg>
<svg style="left:275.5px;top:701px" width="4" height="7" viewBox="0 0 4 7"><path d="M0.5 0.5L3.2 3.5 0.5 6.5" fill="none" stroke="#b4b4b4" stroke-width="1"/></svg>
<div class="a" style="left:311.6px;top:694px;width:51.2px;height:19px;background:#fff;border-left:1px solid #a8a8a8;border-right:1px solid #c8c8c8"></div>
<div class="a" style="left:311.6px;top:712px;width:51.2px;height:2px;background:#217346"></div>
<div class="t" style="left:311.6px;width:51.2px;text-align:center;top:699.5px;font-size:9.6px;font-weight:bold;-webkit-text-stroke:0;color:#217346">Sheet1</div>
<svg style="left:388.5px;top:698.8px" width="13" height="13" viewBox="0 0 13 13"><circle cx="6.5" cy="6.5" r="5.8" fill="none" stroke="#666" stroke-width="1.1"/><path d="M6.5 3.3V9.7M3.3 6.5H9.7" stroke="#555" stroke-width="1.3"/></svg>
<div class="a" style="left:481.2px;top:700.8px;width:1.3px;height:1.3px;background:#909090"></div>
<div class="a" style="left:481.2px;top:704.6px;width:1.3px;height:1.3px;background:#909090"></div>
<div class="a" style="left:481.2px;top:708.4px;width:1.3px;height:1.3px;background:#909090"></div>
<div class="a" style="left:494.4px;top:699.6px;width:12.2px;height:12px;background:#fff;border:1px solid #b4b4b4;border-radius:2px"></div>
<svg style="left:498.5px;top:702.8px" width="3.5" height="6" viewBox="0 0 3.5 6"><path d="M3.5 0V6L0 3z" fill="#555"/></svg>
<div class="a" style="left:506px;top:699.6px;width:223px;height:12px;background:#fff;border:1px solid #b4b4b4;border-radius:2px;border-radius:0 1px 1px 0"></div>
<div class="a" style="left:729px;top:699.6px;width:34.6px;height:12px;background:#dadada"></div>
<div class="a" style="left:763.6px;top:699.6px;width:12px;height:12px;background:#fff;border:1px solid #b4b4b4;border-radius:2px"></div>
<svg style="left:768px;top:702.8px" width="3.5" height="6" viewBox="0 0 3.5 6"><path d="M0 0V6L3.5 3z" fill="#555"/></svg>
<!-- excel title bar contents -->
<div class="t" style="left:238.3px;top:113.3px;font-size:9.2px;color:#5c9a78">AutoSave</div>
<div class="a" style="left:283.6px;top:111px;width:30.3px;height:12.4px;border:1px solid #5c9a78;border-radius:6.5px"></div>
<div class="a" style="left:287.5px;top:114.6px;width:5.2px;height:5.2px;border-radius:50%;background:#5c9a78"></div>
<div class="t" style="left:297.5px;top:113.2px;font-size:8.6px;color:#5c9a78">Off</div>
<svg style="left:324.7px;top:111.8px" width="14" height="14" viewBox="0 0 14 14"><path d="M0.7 0.7H11L13.3 3V13.3H0.7Z" fill="none" stroke="#fff" stroke-width="1.2"/><path d="M3.5 0.7V4.5H10V0.7" fill="none" stroke="#fff" stroke-width="1.1"/><path d="M3 13.3V8.3H11V13.3" fill="none" stroke="#fff" stroke-width="1.1"/></svg>
<svg style="left:348px;top:111.5px" width="14" height="14" viewBox="0 0 14 14"><path d="M5 13.5L10 8.2C12.5 5.5 11.5 1.2 7.5 1.2 5 1.2 3.2 2.6 1.5 4.5" fill="none" stroke="#fff" stroke-width="1.3"/><path d="M1 1V5.3H5.3" fill="none" stroke="#fff" stroke-width="1.3"/></svg>
<svg style="left:364.3px;top:116.2px" width="5" height="3" viewBox="0 0 5 3"><path d="M0 0H5L2.5 3z" fill="#fff"/></svg>
<svg style="left:376px;top:111.5px" width="14" height="14" viewBox="0 0 14 14"><path d="M9 13.5L4 8.2C1.5 5.5 2.5 1.2 6.5 1.2 9 1.2 10.8 2.6 12.5 4.5" fill="none" stroke="#5c9a78" stroke-width="1.3"/><path d="M13 1V5.3H8.7" fill="none" stroke="#5c9a78" stroke-width="1.3"/></svg>
<svg style="left:392px;top:116.2px" width="5" height="3" viewBox="0 0 5 3"><path d="M0 0H5L2.5 3z" fill="#5c9a78"/></svg>
<svg style="left:402px;top:111px" width="11" height="15" viewBox="0 0 11 15"><circle cx="5" cy="4.5" r="3.6" fill="none" stroke="#fff" stroke-width="1.2"/><path d="M4.3 4.3V11.5L2.8 10.3C2 9.8 1.3 10.5 1.8 11.2L4.2 14.3H9.2L10 10.5C10.2 9.5 9.5 9 8.8 9L6 8.5V4.3C6 3.3 4.3 3.3 4.3 4.3Z" fill="#217346" stroke="#fff" stroke-width="1.1"/></svg>
<svg style="left:418.3px;top:116.2px" width="5" height="3" viewBox="0 0 5 3"><path d="M0 0H5L2.5 3z" fill="#fff"/></svg>
<div class="a" style="left:433.8px;top:115.5px;width:5px;height:1px;background:#fff"></div>
<svg style="left:433.8px;top:118px" width="5" height="3" viewBox="0 0 5 3"><path d="M0 0H5L2.5 3z" fill="#fff"/></svg>

<!-- tabs -->
<div class="t" style="left:282.3px;top:139.3px;font-size:10.4px;color:#262626;letter-spacing:0.15px">Home</div>
<div class="a" style="left:282.3px;top:150.5px;width:29.5px;height:2.3px;background:#217346"></div>
<div class="t" style="left:325px;top:139.3px;font-size:10px;color:#3b3b3b">Insert</div>
<div class="t" style="left:367px;top:139.3px;font-size:10px;color:#3b3b3b">Page Layout</div>
<div class="t" style="left:437.9px;top:139.3px;font-size:10px;color:#3b3b3b">Formulas</div>
<div class="t" style="left:494px;top:139.3px;font-size:10px;color:#3b3b3b">Data</div>
<div class="t" style="left:530.5px;top:139.3px;font-size:10px;color:#3b3b3b;letter-spacing:-0.2px">Review</div>
<div class="t" style="left:575px;top:139.3px;font-size:10px;color:#3b3b3b">View</div>
<div class="t" style="left:610.5px;top:139.3px;font-size:10px;color:#3b3b3b">Help</div>
<svg style="left:647.5px;top:136.5px" width="12" height="13" viewBox="0 0 12 13"><circle cx="7" cy="5" r="3.9" fill="none" stroke="#444" stroke-width="1.1"/><path d="M4.3 7.8L0.8 11.8" stroke="#444" stroke-width="1.3"/></svg>
<div class="t" style="left:668.4px;top:139.3px;font-size:10.3px;color:#3b3b3b">Tell me</div>
<div class="a" style="left:724.6px;top:133.7px;width:23.8px;height:18.3px;background:#fff;border:1px solid #e1dfdd;border-radius:2px"></div>
<svg style="left:730.5px;top:137.5px" width="12" height="11" viewBox="0 0 12 11"><path d="M0.7 4.5V10.3H9.5V8" fill="none" stroke="#217346" stroke-width="1.1"/><path d="M3 8.5C3.2 5 5.5 3.8 8.5 3.8V5.8L11.3 3 8.5 0.3V2.2C5 2.2 3 4.5 3 8.5Z" fill="none" stroke="#217346" stroke-width="1.1"/></svg>
<div class="a" style="left:755.6px;top:133.7px;width:24.6px;height:18.3px;background:#fff;border:1px solid #e1dfdd;border-radius:2px"></div>
<svg style="left:763px;top:138.5px" width="11" height="10" viewBox="0 0 11 10"><path d="M0.5 0.5H10V6.8H4.5L2 9V6.8H0.5Z" fill="none" stroke="#b8b8b8" stroke-width="1"/></svg>

<!-- group separators -->
<div class="a" style="left:305px;top:158px;width:1px;height:70px;background:#c8c6c4"></div>
<div class="a" style="left:421px;top:158px;width:1px;height:70px;background:#c8c6c4"></div>
<div class="a" style="left:479.5px;top:158px;width:1px;height:70px;background:#c8c6c4"></div>
<div class="a" style="left:528px;top:158px;width:1px;height:70px;background:#c8c6c4"></div>
<div class="a" style="left:668.5px;top:158px;width:1px;height:70px;background:#c8c6c4"></div>
<div class="a" style="left:711px;top:158px;width:1px;height:70px;background:#c8c6c4"></div>
<div class="a" style="left:754px;top:158px;width:1px;height:70px;background:#c8c6c4"></div>

<!-- Clipboard group -->
<svg style="left:245.5px;top:161px" width="23" height="24" viewBox="0 0 23 24"><path d="M0.6 3.5H4.5V1.8H12V3.5H15.5V21.5H0.6Z" fill="#ecebea" stroke="#c4c4c4" stroke-width="1.1"/><rect x="4.5" y="0.6" width="7.5" height="3.8" rx="1" fill="#f3f2f1" stroke="#c4c4c4" stroke-width="1.1"/><rect x="9.8" y="9.5" width="12.5" height="14" fill="#f0efee" stroke="#c4c4c4" stroke-width="1.1"/></svg>
<div class="t" style="left:244px;top:188.9px;font-size:9.5px;color:#a8a8a8">Paste</div>
<svg style="left:252.8px;top:204px" width="5" height="3" viewBox="0 0 5 3"><path d="M0 0H5L2.5 3z" fill="#b4b4b4"/></svg>
<svg style="left:275.5px;top:160.5px" width="10" height="13" viewBox="0 0 10 13"><path d="M2 0.5L6.5 9M8 0.5L3.5 9" stroke="#3a3a3a" stroke-width="1.1"/><circle cx="2.5" cy="10.8" r="1.6" fill="none" stroke="#2a88d8" stroke-width="1.3"/><circle cx="7.5" cy="10.8" r="1.6" fill="none" stroke="#2a88d8" stroke-width="1.3"/></svg>
<svg style="left:273.5px;top:179px" width="14" height="14" viewBox="0 0 14 14"><path d="M6 2.2V0.7H1V10.5H4" fill="none" stroke="#333" stroke-width="1.1"/><path d="M4.5 3.8H10L12.8 6.6V13.3H4.5Z" fill="#fff" stroke="#333" stroke-width="1.1"/><path d="M6.5 8.5H10.5M6.5 10.8H10.5" stroke="#666" stroke-width="0.8"/></svg>
<svg style="left:291px;top:185px" width="5" height="3" viewBox="0 0 5 3"><path d="M0 0H5L2.5 3z" fill="#444"/></svg>
<svg style="left:273.5px;top:198px" width="14" height="13" viewBox="0 0 14 13"><path d="M7.5 4.5L11.5 0.8 13.2 2.5 9.5 6.5Z" fill="#fff" stroke="#333" stroke-width="1"/><path d="M6 4L10 8 8.5 9.5 4.5 5.5Z" fill="#fff" stroke="#333" stroke-width="1"/><path d="M4.8 5.8L1 9 4 12.5 8.2 9.2Z" fill="#f39a4a" stroke="#e0701a" stroke-width="0.9"/><path d="M2.5 10L4.5 8.5" stroke="#fff" stroke-width="0.8"/></svg>
<div class="t" style="left:241.5px;top:220px;font-size:9.4px;color:#444">Clipboard</div>
<svg style="left:296px;top:222px" width="6" height="6" viewBox="0 0 6 6"><path d="M0.5 5.5V0.5H5.5V5.5Z" fill="none" stroke="#888" stroke-width="0.8"/><path d="M2 2L5 5M5 3V5H3" fill="none" stroke="#555" stroke-width="0.9"/></svg>

<!-- Font group -->
<div class="a" style="left:312.2px;top:158.2px;width:69.8px;height:17.6px;background:#fff;border:1px solid #c8c6c4"></div>
<div class="a" style="left:381px;top:158.2px;width:34.6px;height:17.6px;background:#fff;border:1px solid #c8c6c4"></div>
<div class="t" style="left:314.7px;top:162.5px;font-size:9.6px;color:#303058">Calibri</div>
<svg style="left:373px;top:166px" width="5" height="3" viewBox="0 0 5 3"><path d="M0 0H5L2.5 3z" fill="#444"/></svg>
<div class="t" style="left:384.5px;top:162.5px;font-size:9.6px;color:#303058">11</div>
<svg style="left:407.5px;top:166px" width="5" height="3" viewBox="0 0 5 3"><path d="M0 0H5L2.5 3z" fill="#444"/></svg>
<div class="t" style="left:316.5px;top:180.5px;font-size:10.5px;font-weight:bold;-webkit-text-stroke:0;color:#333">B</div>
<div class="t" style="left:335.3px;top:180.8px;font-size:10.5px;font-style:italic;color:#333">I</div>
<div class="t" style="left:350.5px;top:180px;font-size:10.5px;color:#333">U</div>
<div class="a" style="left:350.5px;top:191.7px;width:8.5px;height:1px;background:#333"></div>
<svg style="left:366.3px;top:185px" width="5" height="3" viewBox="0 0 5 3"><path d="M0 0H5L2.5 3z" fill="#444"/></svg>
<div class="a" style="left:377.5px;top:178px;width:1px;height:16px;background:#d6d4d2"></div>
<div class="t" style="left:385px;top:181px;font-size:10px;color:#444">A</div>
<svg style="left:391.5px;top:180.5px" width="5" height="3" viewBox="0 0 5 3"><path d="M0.5 2.5L2.5 0.6 4.5 2.5" fill="none" stroke="#2a88d8" stroke-width="0.9"/></svg>
<div class="t" style="left:403px;top:182.5px;font-size:8.6px;color:#444">A</div>
<svg style="left:408.5px;top:180px" width="5" height="3" viewBox="0 0 5 3"><path d="M0.5 0.5L2.5 2.4 4.5 0.5" fill="none" stroke="#2a88d8" stroke-width="0.9"/></svg>
<svg style="left:314px;top:198px" width="13" height="13" viewBox="0 0 13 13"><rect x="0.6" y="0.6" width="11.8" height="11.8" fill="none" stroke="#333" stroke-width="1.1"/><path d="M6.5 0.6V12.4M0.6 6.5H12.4" stroke="#333" stroke-width="1.1"/></svg>
<svg style="left:331px;top:203px" width="5" height="3" viewBox="0 0 5 3"><path d="M0 0H5L2.5 3z" fill="#444"/></svg>
<div class="a" style="left:342.5px;top:197px;width:1px;height:16px;background:#d6d4d2"></div>
<svg style="left:348.5px;top:197.5px" width="14" height="12" viewBox="0 0 14 12"><path d="M4.5 1L9.5 5.5 5.5 9.5 0.8 5Z" fill="#fff" stroke="#333" stroke-width="1.1"/><path d="M4.5 1L3 -0.5" stroke="#333" stroke-width="1"/><path d="M10.5 5C11.5 3 11.5 1.5 10 1" fill="none" stroke="#2a88d8" stroke-width="1.2"/></svg>
<div class="a" style="left:348.5px;top:208.5px;width:13px;height:2.5px;background:#fbe8a4"></div>
<svg style="left:366px;top:203px" width="5" height="3" viewBox="0 0 5 3"><path d="M0 0H5L2.5 3z" fill="#444"/></svg>
<div class="t" style="left:377px;top:197.5px;font-size:10.5px;color:#333">A</div>
<div class="a" style="left:375px;top:208.2px;width:13px;height:2.8px;background:#e81818"></div>
<svg style="left:393px;top:203px" width="5" height="3" viewBox="0 0 5 3"><path d="M0 0H5L2.5 3z" fill="#444"/></svg>
<div class="t" style="left:347.5px;top:220px;font-size:9.6px;color:#444">Font</div>
<svg style="left:412px;top:222px" width="6" height="6" viewBox="0 0 6 6"><path d="M0.5 5.5V0.5H5.5V5.5Z" fill="none" stroke="#888" stroke-width="0.8"/><path d="M2 2L5 5M5 3V5H3" fill="none" stroke="#555" stroke-width="0.9"/></svg>

<!-- Alignment / Number -->
<div class="a" style="left:438.2px;top:158.2px;width:23.6px;height:23.3px;background:#fff;border:1px solid #d6d4d2"></div>
<svg style="left:444px;top:164px" width="12" height="11" viewBox="0 0 12 11"><path d="M0.5 0.7H11.5M2 3.7H10M0.5 6.7H11.5M2 9.7H10" stroke="#444" stroke-width="1.1"/></svg>
<div class="t" style="left:428.8px;top:187.4px;font-size:9.8px;color:#444">Alignment</div>
<svg style="left:448.5px;top:203px" width="5" height="3" viewBox="0 0 5 3"><path d="M0 0H5L2.5 3z" fill="#444"/></svg>
<div class="a" style="left:491.2px;top:158.2px;width:23.5px;height:23.3px;background:#fff;border:1px solid #d6d4d2"></div>
<div class="t" style="left:496.3px;top:162.3px;font-size:13px;color:#333">%</div>
<div class="t" style="left:486.5px;top:187.4px;font-size:9.7px;color:#444">Number</div>
<svg style="left:501.5px;top:203px" width="5" height="3" viewBox="0 0 5 3"><path d="M0 0H5L2.5 3z" fill="#444"/></svg>

<!-- Styles -->
<svg style="left:537px;top:160px" width="13" height="12" viewBox="0 0 13 12"><rect x="0.5" y="0.5" width="12" height="11" fill="#fff" stroke="#505050" stroke-width="1"/><path d="M0.5 4H12.5M0.5 7.8H12.5M4.5 0.5V11.5M8.5 0.5V11.5" stroke="#c0c0c0" stroke-width="0.7"/><rect x="2" y="1" width="6" height="2.6" fill="#e42424"/><rect x="2" y="4.6" width="2.3" height="2.8" fill="#2a7ad8"/><rect x="2" y="8.3" width="6" height="2.7" fill="#e42424"/></svg>
<div class="t" style="left:552.5px;top:162.2px;font-size:9.75px;color:#3b3b3b">Conditional Formatting</div>
<svg style="left:652.5px;top:165.5px" width="5" height="3" viewBox="0 0 5 3"><path d="M0 0H5L2.5 3z" fill="#444"/></svg>
<svg style="left:537px;top:178.5px" width="13" height="13" viewBox="0 0 13 13"><rect x="0.5" y="0.5" width="12" height="11.5" fill="#fff" stroke="#505050" stroke-width="1"/><path d="M0.5 4H12.5M0.5 8H12.5M4.5 0.5V12M8.5 0.5V12" stroke="#b0b0b0" stroke-width="0.7"/><rect x="4.5" y="3.5" width="7.5" height="8" fill="#3a8ae0"/><path d="M4 11L12 3" stroke="#333" stroke-width="2"/><path d="M1.5 12.5L4.5 10" stroke="#1e6ad0" stroke-width="2.4" stroke-linecap="round"/></svg>
<div class="t" style="left:552.5px;top:180.2px;font-size:9.4px;color:#3b3b3b">Format as Table</div>
<svg style="left:621.5px;top:183.5px" width="5" height="3" viewBox="0 0 5 3"><path d="M0 0H5L2.5 3z" fill="#444"/></svg>
<svg style="left:537px;top:196.8px" width="13" height="13" viewBox="0 0 13 13"><rect x="0.5" y="0.5" width="12" height="11.5" fill="#fff" stroke="#505050" stroke-width="1"/><path d="M1 1H12V2.5L2.5 11.5H1Z" fill="#5aa2ea"/><path d="M4 11L12 3" stroke="#333" stroke-width="2"/><path d="M1.5 12.5L4.5 10" stroke="#1e6ad0" stroke-width="2.4" stroke-linecap="round"/></svg>
<div class="t" style="left:552.5px;top:198.2px;font-size:9.4px;color:#3b3b3b">Cell Styles</div>
<svg style="left:597.5px;top:201.5px" width="5" height="3" viewBox="0 0 5 3"><path d="M0 0H5L2.5 3z" fill="#444"/></svg>
<div class="t" style="left:587px;top:220px;font-size:9.6px;letter-spacing:-0.5px;color:#444">Styles</div>

<!-- Cells / Editing -->
<div class="a" style="left:678px;top:158px;width:24px;height:23.3px;background:#fff;border:1px solid #d6d4d2"></div>
<svg style="left:684px;top:163.5px" width="12" height="12" viewBox="0 0 12 12"><rect x="0.5" y="1.5" width="11" height="9.5" fill="#fff" stroke="#444" stroke-width="1"/><rect x="2" y="3.5" width="8" height="5.5" fill="#3a88dc"/><path d="M0.5 4H11.5M0.5 7.5H11.5M4 1.5V11M8 1.5V11" stroke="#2a5aa0" stroke-width="0.6"/><path d="M2 0.5H10" stroke="#3a88dc" stroke-width="1"/></svg>
<div class="t" style="left:678px;width:24px;text-align:center;top:187.4px;font-size:9.6px;color:#444">Cells</div>
<svg style="left:687.5px;top:203px" width="5" height="3" viewBox="0 0 5 3"><path d="M0 0H5L2.5 3z" fill="#444"/></svg>
<div class="a" style="left:720.6px;top:158.2px;width:23.8px;height:23.1px;background:#fff;border:1px solid #d6d4d2"></div>
<svg style="left:727px;top:163.5px" width="12" height="12" viewBox="0 0 12 12"><circle cx="7.3" cy="4.7" r="3.8" fill="none" stroke="#333" stroke-width="1.1"/><path d="M4.5 7.5L0.8 11.2" stroke="#333" stroke-width="1.3"/></svg>
<div class="t" style="left:718.7px;top:187.6px;font-size:9.4px;color:#444">Editing</div>
<svg style="left:730.5px;top:203px" width="5" height="3" viewBox="0 0 5 3"><path d="M0 0H5L2.5 3z" fill="#444"/></svg>
<svg style="left:775px;top:222.5px" width="8" height="5" viewBox="0 0 8 5"><path d="M0.8 4.2L4 1 7.2 4.2" fill="none" stroke="#444" stroke-width="1.2"/></svg>
<!-- left/right/bottom blue frame -->
<div class="a" style="left:0;top:0;width:5px;height:725px;background:#68c9ea"></div>
<div class="a" style="left:792.5px;top:0;width:5.5px;height:725px;background:linear-gradient(90deg,#6ac8ec 0,#6ac8ec 85%,#78d8fa 100%)"></div>
<div class="a" style="left:798px;top:0;width:1px;height:725px;background:#3c5868"></div>
<div class="a" style="left:799px;top:0;width:1px;height:725px;background:#d8d0d0"></div>
<div class="a" style="left:0;top:718.5px;width:798px;height:5.5px;background:linear-gradient(180deg,#60c8ec 0,#60c8ec 80%,#70d8fa 100%)"></div>
<div class="a" style="left:0;top:724px;width:800px;height:1px;background:#303840"></div>
</body></html>
